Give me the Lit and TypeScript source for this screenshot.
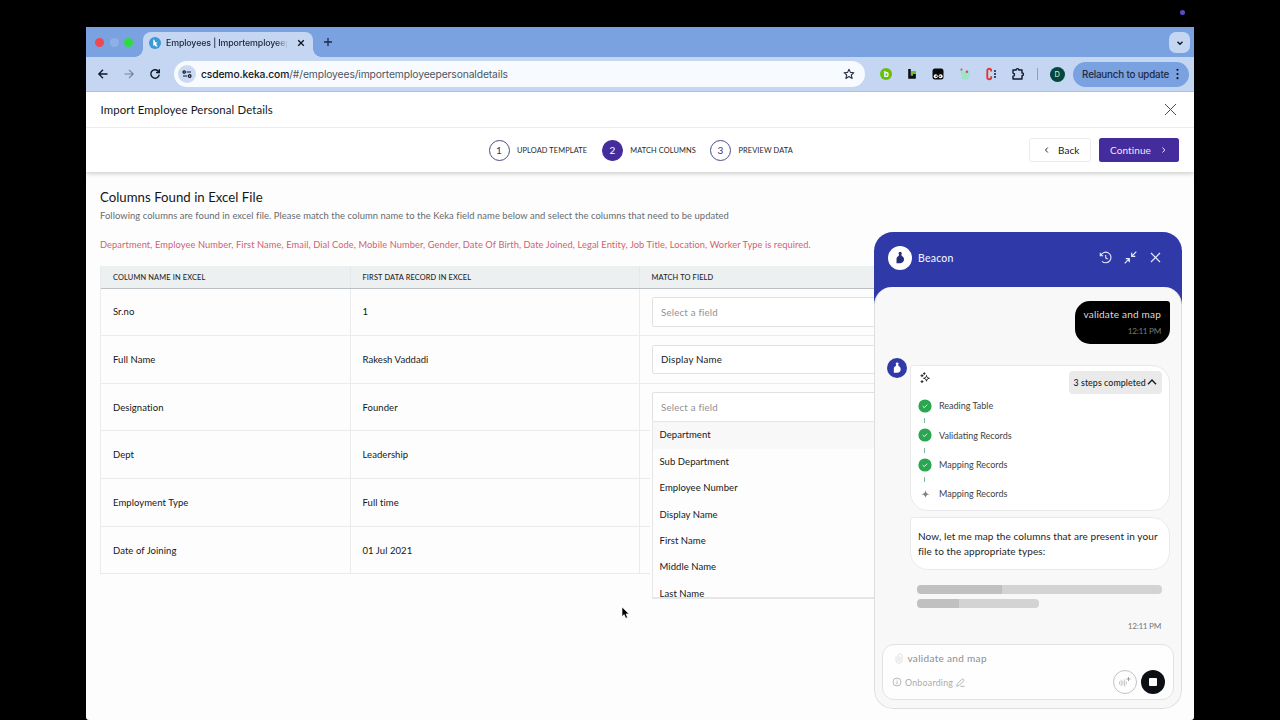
import { LitElement, html, css, svg } from "lit";
import { customElement } from "lit/decorators.js";

const beaconMark = (color: string) => svg`
  <circle cx="12.200" cy="7" r="1.700" fill=${color}></circle>
  <path d="M11 8h2.300l.6 1.700c1.500.6 2.500 2 2.500 3.700 0 2.500-1.700 4.200-4 4.200H8.200v-4.400c0-1.800.9-3 2.300-3.500z" fill=${color}></path>`;

@customElement("browser-chrome")
class BrowserChrome extends LitElement {
  static styles = css`
    :host { display: block; font-family: Inter, Roboto, sans-serif; color: #1c2536; }
    * { box-sizing: border-box; }
    svg { display: block; flex: none; }
    .strip { display: flex; align-items: flex-start; height: 30px; background: #7aa2e0; padding: 0 4px 0 9px; }
    .lights { display: flex; gap: 5.3px; padding-top: 10.500px; width: 48px; }
    .light { width: 9.300px; height: 9.300px; border-radius: 50%; }
    .red { background: #ee4852; } .dim { background: #8fb0e6; } .green { background: #2fdb42; }
    .tab { position: relative; display: flex; align-items: center; width: 170px; height: 25px; margin-top: 5px; background: #c4d6f1; border-radius: 8px 8px 0 0; padding: 0 8px 4px 6px; }
    .tab::before, .tab::after { content: ""; position: absolute; bottom: 0; width: 8px; height: 8px; }
    .tab::before { left: -8px; background: radial-gradient(circle at 0 0, #7aa2e0 7.500px, #c4d6f1 8px); }
    .tab::after { right: -8px; background: radial-gradient(circle at 100% 0, #7aa2e0 7.500px, #c4d6f1 8px); }
    .tabtitle { width: 123px; margin-left: 5px; margin-right: 8px; white-space: nowrap; font-size: 8.800px; font-weight: 500; letter-spacing: -.11px; line-height: 14px; -webkit-mask-image: linear-gradient(90deg, #000 90%, transparent 99%); mask-image: linear-gradient(90deg, #000 90%, transparent 99%); }
    .plus { margin: 10px 0 0 10px; }
    .chev { margin-left: auto; margin-top: 5px; width: 21px; height: 21px; border-radius: 7px; background: #c4d6f1; display: grid; place-items: center; }
    .bar { display: flex; align-items: center; height: 35px; background: linear-gradient(#c4d6f1, #c4d6f1) padding-box; border-bottom: 1.500px solid #b0c0dc; padding-right: 5px; }
    .nav { display: flex; width: 88px; padding-left: 9.500px; gap: 12px; }
    .omni { display: flex; align-items: center; width: 692px; height: 26px; border-radius: 13px; background: #f7fbff; padding: 0 10px 0 4px; }
    .site { display: grid; place-items: center; width: 18px; height: 18px; border-radius: 50%; background: #cbdaf2; margin-right: 5px; }
    .url { font-size: 10.300px; color: #4c5564; letter-spacing: -.11px; flex: 1; white-space: nowrap; }
    .host { color: #10161f; font-weight: 500; }
    .ext { display: flex; align-items: center; gap: 12.400px; margin-left: 13.500px; }
    .sep { width: 1px; height: 12px; background: #7aa2e0; margin-left: 12px; }
    .user { width: 15px; height: 15px; border-radius: 50%; background: #05483b; color: #d6f0e6; font-size: 7.500px; display: grid; place-items: center; margin: 0 8.500px 0 12px; }
    .relaunch { display: flex; align-items: center; justify-content: space-between; width: 116px; height: 25px; border-radius: 13px; background: #7aa2e0; padding: 0 9.500px 0 9px; font-size: 9.800px; letter-spacing: -.18px; font-weight: 500; white-space: nowrap; color: #1d2a44; }
    .glyph { font: 700 8px Inter, sans-serif; }
    .glyphb { font: 900 13px Inter, sans-serif; }
  `;
  render() {
    return html`
      <div class="strip">
        <div class="lights"><span class="light red"></span><span class="light dim"></span><span class="light green"></span></div>
        <div class="tab">
          <svg width="12" height="12" viewBox="0 0 12 12"><circle cx="6" cy="6" r="6" fill="#3c98d6"></circle><path d="M4.300 2.500v6.600l1.400-1.200 1.100 1.500h2L7 7l1.700-1.500H6.500L5.300 2.700z" fill="#fff"></path></svg>
          <span class="tabtitle">Employees | Importemployeep</span>
          <svg width="8" height="8" viewBox="0 0 8 8" stroke="#10161f" stroke-width="1.300"><path d="M1.200 1.200l5.600 5.600M6.800 1.200L1.200 6.800"></path></svg>
        </div>
        <svg class="plus" width="10" height="10" viewBox="0 0 10 10" stroke="#1c2a48" stroke-width="1.300"><path d="M5 1v8M1 5h8"></path></svg>
        <div class="chev"><svg width="8" height="8" viewBox="0 0 8 8" fill="none" stroke="#10161f" stroke-width="1.400"><path d="M1.500 2.700L4 5.200l2.500-2.500"></path></svg></div>
      </div>
      <div class="bar">
        <div class="nav">
          <svg width="14" height="14" viewBox="0 0 14 14" fill="none" stroke="#10182a" stroke-width="1.300"><path d="M11.500 7H3M7 2.800L2.800 7 7 11.200"></path></svg>
          <svg width="14" height="14" viewBox="0 0 14 14" fill="none" stroke="#75849e" stroke-width="1.200"><path d="M2.500 7H11M7 2.800L11.200 7 7 11.200"></path></svg>
          <svg width="14" height="14" viewBox="0 0 14 14" fill="none" stroke="#10182a" stroke-width="1.400"><path d="M11.200 7.600A4.200 4.200 0 1 1 10 4L11 5M11.300 2.300V5.500H8"></path></svg>
        </div>
        <div class="omni">
          <span class="site"><svg width="10" height="10" viewBox="0 0 10 10" fill="none" stroke="#10182a" stroke-width="1.200"><circle cx="2.200" cy="3" r="1.200"></circle><path d="M4.600 3H9M1 7h4.200"></path><circle cx="7.700" cy="7" r="1.300"></circle></svg></span>
          <span class="url"><span class="host">csdemo.keka.com</span>/#/employees/importemployeepersonaldetails</span>
          <svg width="12" height="12" viewBox="0 0 12 12" fill="none" stroke="#2a3444" stroke-width="1.100" stroke-linejoin="round"><path d="M6 1.200l1.400 3.200 3.500.3-2.600 2.300.8 3.400L6 8.600l-3.100 1.800.8-3.400L1.100 4.700l3.500-.3z"></path></svg>
        </div>
        <div class="ext">
          <svg width="14" height="14" viewBox="0 0 14 14"><circle cx="7" cy="7" r="6" fill="#6cbb10"></circle><text class="glyph" x="4.700" y="10" fill="#fff">b</text></svg>
          <svg width="14" height="14" viewBox="0 0 14 14"><path d="M6 4h5v6H6z" fill="#6cc02a"></path><path d="M3.200 2h2.600v6.800H8V7h2.800v4.800H3.200z" fill="#0b0f14"></path></svg>
          <svg width="14" height="14" viewBox="0 0 14 14"><rect x="1.500" y="1.500" width="11" height="11" rx="2.500" fill="#0a0a0c"></rect><circle cx="4.700" cy="9.300" r="2" fill="#fff"></circle><circle cx="9.600" cy="9.300" r="2" fill="#fff"></circle><circle cx="5.200" cy="9.300" r=".8"></circle><circle cx="9.100" cy="9.300" r=".8"></circle></svg>
          <svg width="14" height="14" viewBox="0 0 14 14"><path d="M2 3.500l4 1.500 5.500-1.500.5 5-2.500 4h-5z" fill="#9fe3c9"></path><circle cx="3.500" cy="2.600" r="1.100" fill="#b8605c"></circle><circle cx="8.900" cy="4.700" r="1.200" fill="#c2504c"></circle></svg>
          <svg width="14" height="14" viewBox="0 0 14 14"><path d="M7.200 4.600V3.400C7.200 2.300 6.500 1.800 5.300 1.800S3.300 2.500 3.300 3.600v6.800c0 1.100.8 1.800 2 1.800s1.900-.6 1.900-1.700V9.300" fill="none" stroke="#dd3a34" stroke-width="1.900"></path><path d="M10 4h2M10 7h2M10 10h2" stroke="#3a4a78" stroke-width="1.900"></path></svg>
          <svg width="14" height="14" viewBox="0 0 14 14" fill="none" stroke="#10182a" stroke-width="1.400" stroke-linejoin="round"><path d="M2 3h3.200c-.2-1.900 2.800-1.900 2.600 0H11v3c1.900-.2 1.900 2.800 0 2.600V12H2V9.300c2-.3 2-3 0-3.300z"></path></svg>
        </div>
        <span class="sep"></span>
        <span class="user">D</span>
        <div class="relaunch"><span>Relaunch to update</span>
          <svg width="3" height="12" viewBox="0 0 3 12" fill="#10182a"><circle cx="1.500" cy="1.800" r="1.100"></circle><circle cx="1.500" cy="6" r="1.100"></circle><circle cx="1.500" cy="10.200" r="1.100"></circle></svg>
        </div>
      </div>`;
  }
}

@customElement("import-page")
class ImportPage extends LitElement {
  static styles = css`
    :host { display: block; color: #14171a; }
    * { box-sizing: border-box; }
    svg { display: block; flex: none; }
    .title { display: flex; align-items: center; justify-content: space-between; height: 36px; padding: 0 17px 0 14.500px; border-bottom: 1px solid #ececee; font-size: 11.400px; letter-spacing: .12px; background: #fff; }
    .steps { display: grid; grid-template-columns: 402.500px auto 1fr; align-items: center; height: 44px; background: #fff; box-shadow: 0 1px 5px rgba(0,0,0,.24); position: relative; clip-path: inset(0 0 -10px 0); }
    .track { grid-column: 2; display: flex; gap: 14px; }
    .step { display: flex; align-items: center; font-size: 7.400px; letter-spacing: .12px; gap: 7.500px; color: #24272c; white-space: nowrap; }
    .num { width: 21px; height: 21px; border: 1px solid #4f4a86; border-radius: 50%; display: grid; place-items: center; font-size: 10px; letter-spacing: 0; color: #3a3470; }
    .on { background: #452c9c; border-color: #452c9c; color: #fff; }
    .s1 { width: 99.500px; } .s2 { width: 94px; }
    .acts { display: flex; justify-content: flex-end; gap: 7.500px; padding-right: 15px; }
    .btn { display: flex; align-items: center; height: 24px; border-radius: 2.500px; font-size: 10px; letter-spacing: .05px; }
    .back { width: 62px; border: 1px solid #ebebed; padding-left: 13.500px; gap: 9.500px; }
    .go { width: 80.500px; background: #452c9c; color: #ece8fa; padding: 0 13.500px 0 11.500px; justify-content: space-between; letter-spacing: .1px; }
    .body { padding: 17px 14px 0; }
    h1 { margin: 0; font-size: 13.200px; font-weight: 400; line-height: 17px; letter-spacing: .03px; }
    p { margin: 0; white-space: nowrap; }
    .desc { font-size: 9.400px; line-height: 14px; margin-top: 3px; color: #666b70; letter-spacing: .07px; }
    .err { font-size: 9.300px; line-height: 14px; margin-top: 15px; color: #d25f70; letter-spacing: .08px; }
    .table { margin-top: 14px; border-left: 1px solid #e9ebed; }
    .row { display: grid; grid-template-columns: 249.500px 289px 1fr; height: 47.660px; border-bottom: 1px solid #e9ebed; font-size: 9.500px; letter-spacing: .06px; }
    .head { height: 22.500px; background: #ecf0f1; border-bottom: 1px solid #b9bfc3; font-size: 7.400px; letter-spacing: .15px; color: #1f2428; font-weight: 500; }
    .cell { display: flex; align-items: center; padding-left: 12px; border-right: 1px solid #e9ebed; }
    .head .cell { border-color: #e4e9eb; padding-top: 2px; }
    .cell:last-child { padding-right: 12px; border-right: 0; }
    .pick { position: relative; flex: 1; height: 29.500px; border: 1px solid #dfe1e3; border-radius: 2px; background: #fff; display: flex; align-items: center; padding-left: 8.500px; font-size: 9.700px; letter-spacing: .2px; }
    .empty { color: #8f9296; }
    .menu { position: absolute; z-index: 2; top: 28px; left: -1px; right: -1px; height: 178px; overflow: hidden; background: #fdfdfd; border: 1px solid #e4e6e8; border-bottom: 2px solid #e6e6e8; color: #14171a; box-shadow: -2px 0 0 #fefefe; }
    .opt { height: 26.400px; line-height: 26.400px; padding-left: 7px; font-size: 9.500px; letter-spacing: .06px; }
    .hot { background: #f8f8f9; }
  `;
  rows = [
    ["Sr.no", "1", "empty"], ["Full Name", "Rakesh Vaddadi", "Display Name"], ["Designation", "Founder", "open"],
    ["Dept", "Leadership", ""], ["Employment Type", "Full time", ""], ["Date of Joining", "01 Jul 2021", ""],
  ];
  options = ["Department", "Sub Department", "Employee Number", "Display Name", "First Name", "Middle Name", "Last Name"];
  picker(v: string) {
    if (!v) return "";
    if (v !== "empty" && v !== "open") return html`<div class="pick">${v}</div>`;
    return html`<div class="pick"><span class="empty">Select a field</span>${v === "open" ? html`<div class="menu">${this.options.map((o, i) => html`<div class="opt ${i ? "" : "hot"}">${o}</div>`)}</div>` : ""}</div>`;
  }
  render() {
    return html`
      <div class="title"><span>Import Employee Personal Details</span>
        <svg width="13" height="13" viewBox="0 0 13 13" stroke="#4b4e54" stroke-width="1"><path d="M1 1l11 11M12 1L1 12"></path></svg></div>
      <div class="steps">
        <div class="track">
          <div class="step s1"><span class="num">1</span>UPLOAD TEMPLATE</div>
          <div class="step s2"><span class="num on">2</span>MATCH COLUMNS</div>
          <div class="step"><span class="num">3</span>PREVIEW DATA</div>
        </div>
        <div class="acts">
          <div class="btn back"><svg width="5" height="8" viewBox="0 0 5 8" fill="none" stroke="#24272c"><path d="M3.800 1.500L1.500 4l2.300 2.500"></path></svg>Back</div>
          <div class="btn go">Continue<svg width="5" height="8" viewBox="0 0 5 8" fill="none" stroke="#ece8fa"><path d="M1.500 1.500L3.800 4 1.500 6.500"></path></svg></div>
        </div>
      </div>
      <div class="body">
        <h1>Columns Found in Excel File</h1>
        <p class="desc">Following columns are found in excel file. Please match the column name to the Keka field name below and select the columns that need to be updated</p>
        <p class="err">Department, Employee Number, First Name, Email, Dial Code, Mobile Number, Gender, Date Of Birth, Date Joined, Legal Entity, Job Title, Location, Worker Type is required.</p>
        <div class="table">
          <div class="row head"><div class="cell">COLUMN NAME IN EXCEL</div><div class="cell">FIRST DATA RECORD IN EXCEL</div><div class="cell">MATCH TO FIELD</div></div>
          ${this.rows.map((r) => html`<div class="row"><div class="cell">${r[0]}</div><div class="cell">${r[1]}</div><div class="cell">${this.picker(r[2])}</div></div>`)}
        </div>
      </div>`;
  }
}

@customElement("beacon-chat")
class BeaconChat extends LitElement {
  static styles = css`
    :host { display: flex; flex-direction: column; background: linear-gradient(#3039a8 0 80px, #f8f8f8 80px); border-radius: 19px; overflow: hidden; }
    * { box-sizing: border-box; }
    svg { display: block; flex: none; }
    .head { display: flex; align-items: center; height: 55.500px; padding: 0 20px 3px 14px; color: #eef0ff; font-size: 10.500px; font-weight: 500; letter-spacing: .2px; }
    .logo { width: 24px; height: 24px; border-radius: 50%; background: #fff; display: grid; place-items: center; margin-right: 6px; }
    .icons { display: flex; gap: 12px; margin-left: auto; }
    .main { flex: 1; display: flex; flex-direction: column; background: #f8f8f8; border-radius: 18px 18px 19px 19px; border: 1.500px solid #dedede; border-top: 0; padding: 13.500px 7px 8px; }
    .me { align-self: flex-end; margin-right: 4.500px; width: 95px; height: 43px; border-radius: 15px 3px 15px 15px; background: #000; color: #dcdcdc; text-align: right; padding: 6px 8.500px 0 0; font-size: 10px; line-height: 15px; letter-spacing: .21px; white-space: nowrap; }
    .t { font-size: 8.200px; color: #76787a; line-height: 19px; letter-spacing: -.3px; }
    .bot { display: flex; margin-top: 14px; margin-left: 4.500px; }
    .ava { width: 20px; height: 20px; border-radius: 50%; background: #3039a8; display: grid; place-items: center; margin-top: .5px; margin-right: 3.500px; }
    .card { width: 260px; background: #fff; border: 1px solid #e9e9e9; border-radius: 3px 18px 18px 18px; }
    .plan { height: 146px; margin-top: 7px; padding: 5px 7.500px 0 7px; }
    .top { display: flex; align-items: flex-start; justify-content: space-between; height: 20.800px; }
    .chip { display: flex; align-items: center; justify-content: space-between; width: 93px; height: 23px; background: #eaeaea; border-radius: 4px; font-size: 8.800px; font-weight: 500; padding: 0 4.500px 0 5px; color: #1a1c1e; letter-spacing: .08px; white-space: nowrap; }
    .item { display: flex; align-items: center; height: 29.300px; gap: 7px; font-size: 9px; color: #3e4144; letter-spacing: 0; position: relative; }
    .item:not(:last-child)::after { content: ""; position: absolute; left: 6px; top: 27px; width: 1px; height: 5px; background: #7fb5a0; }
    .say { height: 53px; margin: 6px 0 0 28px; padding: 11.500px 7px; font-size: 10px; line-height: 15.300px; letter-spacing: .09px; color: #222528; white-space: nowrap; }
    .bone { height: 8.500px; border-radius: 4px; margin: 15.500px 0 0 35px; width: 244.500px; background: linear-gradient(90deg, #c0c0c0 34.500%, #d3d3d3 34.500%); }
    .short { width: 122px; margin-top: 5.500px; }
    .when { align-self: flex-end; margin: 9px 13px 0 0; }
    .input { margin-top: auto; height: 56px; border: 1px solid #e2e2e2; border-radius: 12px; background: #fefefe; display: grid; grid-template-columns: 1fr auto; padding: 6px 8px 4px 9px; color: #8b8d90; font-size: 10px; }
    .draft { grid-column: 1 / 3; display: flex; align-items: center; gap: 4.500px; height: 15px; padding-left: 3px; letter-spacing: .32px; }
    .ctx { display: flex; align-items: center; gap: 3px; color: #a9abad; font-size: 8.800px; letter-spacing: .25px; height: 33px; }
    .ctl { display: flex; gap: 4.500px; align-items: center; height: 33px; }
    .mic { width: 24px; height: 24px; border-radius: 50%; border: 1px solid #c2c2c2; display: grid; place-items: center; }
    .stop { width: 24px; height: 24px; border-radius: 50%; background: #0c1014; display: grid; place-items: center; }
    .sq { width: 8px; height: 8px; background: #fff; border-radius: 1px; }
  `;
  check() {
    return html`<svg width="14" height="14" viewBox="0 0 14 14"><circle cx="7" cy="7" r="6.600" fill="#2aa650"></circle><path d="M4.700 7.100l1.600 1.500 2.900-2.900" fill="none" stroke="#e6f7ea" stroke-width="1"></path></svg>`;
  }
  render() {
    return html`
      <div class="head">
        <span class="logo"><svg width="22" height="22" viewBox="0 0 24 24">${beaconMark("#252c80")}</svg></span>Beacon
        <div class="icons">
          <svg width="13" height="13" viewBox="0 0 13 13" fill="none" stroke="#e6e8ff" stroke-width="1.100"><path d="M1.800 4.300A5.300 5.300 0 1 1 3 10.300M1.300 1.800v2.900h2.900M6.700 4v2.800l2 1.100"></path></svg>
          <svg width="13" height="13" viewBox="0 0 13 13" fill="none" stroke="#e6e8ff" stroke-width="1.200"><path d="M12.300.7L7.700 5.300M7.700 1.700v3.600h3.600M.7 12.300l4.600-4.600M1.700 7.700h3.600v3.600"></path></svg>
          <svg width="13" height="13" viewBox="0 0 13 13" stroke="#e6e8ff" stroke-width="1.200"><path d="M2 2l9 9M11 2l-9 9"></path></svg>
        </div>
      </div>
      <div class="main">
        <div class="me">validate and map<div class="t">12:11 PM</div></div>
        <div class="bot">
          <span class="ava"><svg width="20" height="20" viewBox="0 0 24 24">${beaconMark("#ffffff")}</svg></span>
          <div class="card plan">
            <div class="top">
              <svg width="14" height="14" viewBox="0 0 14 14" fill="none" stroke="#222" stroke-width="1"><path d="M8.500 4.500c.3 1.800.8 2.400 2.900 2.800-2.100.4-2.600 1-2.900 2.900-.3-1.900-.8-2.500-2.900-2.900 2.100-.4 2.600-1 2.900-2.800z"></path><path d="M4 3.200v3M2.500 4.700h3M6.300 1.400v2.400M5.100 2.600h2.400M4 9.200v2.800M2.600 10.600h2.800"></path></svg>
              <div class="chip">3 steps completed<svg width="10" height="8" viewBox="0 0 10 8" fill="none" stroke="#1a1c1e" stroke-width="1.400"><path d="M1 6.200L5 2l4 4.200"></path></svg></div>
            </div>
            <div class="item">${this.check()}Reading Table</div>
            <div class="item">${this.check()}Validating Records</div>
            <div class="item">${this.check()}Mapping Records</div>
            <div class="item"><svg width="14" height="14" viewBox="0 0 14 14"><path d="M7.500 3c.5 2.900 1.200 3.700 4 4.200-2.800.5-3.500 1.200-4 4.100-.5-2.900-1.200-3.600-4-4.100 2.800-.5 3.500-1.300 4-4.200z" fill="#808284"></path></svg>Mapping Records</div>
          </div>
        </div>
        <div class="card say">Now, let me map the columns that are present in your<br>file to the appropriate types:</div>
        <div class="bone"></div><div class="bone short"></div>
        <div class="t when">12:11 PM</div>
        <div class="input">
          <div class="draft"><svg width="8" height="11" viewBox="0 0 8 11" fill="none" stroke="#dcdcdc" stroke-width=".9"><path d="M1 3.500v3.800a3 3 0 0 0 6 0V2.800a2 2 0 0 0-4 0v4.400a1 1 0 0 0 2 0V3.500"></path></svg>validate and map</div>
          <div class="ctx"><svg width="10" height="10" viewBox="0 0 10 10" fill="none" stroke="#b0b2b4" stroke-width=".9"><circle cx="5" cy="5" r="4"></circle><path d="M5 4.400v3M5 2.600v.9"></path></svg>Onboarding<svg width="9" height="9" viewBox="0 0 9 9" fill="none" stroke="#a9abad" stroke-width=".9"><path d="M.8 8.200l.5-2.300L6 1.200c.8-.8 2.500.9 1.700 1.700L3 7.600zM4.500 8.300h4"></path></svg></div>
          <div class="ctl"><span class="mic"><svg width="14" height="14" viewBox="0 0 14 14" fill="none" stroke="#c2c2c2" stroke-width=".9"><path d="M1.500 6.500v3M3.200 4.800v6.400M4.900 5.800v4.400M6.600 4.300v7.400M8.300 6.500v3"></path><path d="M10.500 2v4M8.500 4h4" stroke="#999"></path></svg></span><span class="stop"><span class="sq"></span></span></div>
        </div>
      </div>`;
  }
}

@customElement("app-root")
class AppRoot extends LitElement {
  static styles = css`
    :host { display: block; position: relative; width: 1280px; height: 720px; overflow: hidden; background: #000; font-family: Lato, "Open Sans", sans-serif; padding: 27px 86px 0; box-sizing: border-box; }
    .win { height: 693px; background: #fdfdfd; border-radius: 0 0 3px 3px; overflow: hidden; }
    .chat { position: absolute; left: 874px; top: 231.500px; width: 308px; height: 477px; z-index: 3; }
    .dot { position: absolute; left: 1179.500px; top: 9.500px; width: 5px; height: 5px; border-radius: 50%; background: #6247c8; }
    .cursor { position: absolute; left: 621px; top: 606px; z-index: 4; }
  `;
  render() {
    return html`
      <div class="win"><browser-chrome></browser-chrome><import-page></import-page></div>
      <beacon-chat class="chat"></beacon-chat>
      <span class="dot"></span>
      <svg class="cursor" width="9" height="14" viewBox="0 0 9 14"><path d="M1 1v9.600l2.200-2 1.500 3.600 1.800-.8L5 7.900h3z" fill="#000" stroke="#fff" stroke-width=".6"></path></svg>`;
  }
}
